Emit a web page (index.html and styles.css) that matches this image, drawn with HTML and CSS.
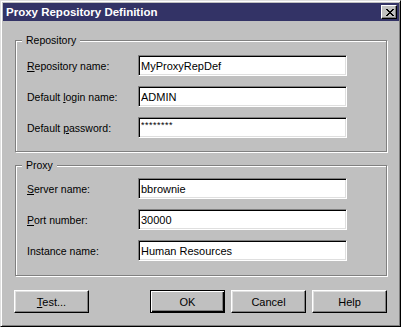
FILE: index.html
```html
<!DOCTYPE html>
<html lang="en">
<head>
    <meta charset="UTF-8">
    <meta name="viewport" content="width=device-width, initial-scale=1.0">
    <title>Proxy Repository Definition</title>
    <link rel="stylesheet" href="styles.css">
</head>
<body>
    <div class="window">
        <div class="titlebar">
            <span class="title">Proxy Repository Definition</span>
            <button class="close-btn" aria-label="Close">
                <svg width="8" height="7" viewBox="0 0 8 7" shape-rendering="crispEdges">
                    <path d="M0 0h2v1H0zM6 0h2v1H6zM1 1h2v1H1zM5 1h2v1H5zM2 2h4v1H2zM3 3h2v1H3zM2 4h4v1H2zM1 5h2v1H1zM5 5h2v1H5zM0 6h2v1H0zM6 6h2v1H6z" fill="#000"/>
                </svg>
            </button>
        </div>

        <div class="dialog-body">
            <fieldset class="group">
                <legend>Repository</legend>
                <div class="form-grid">
                    <label for="rep-name"><u>R</u>epository name:</label>
                    <input id="rep-name" class="field" type="text" value="MyProxyRepDef">

                    <label for="login-name">Default <u>l</u>ogin name:</label>
                    <input id="login-name" class="field" type="text" value="ADMIN">

                    <label for="password">Default <u>p</u>assword:</label>
                    <input id="password" class="field field-secret" type="text" value="********">
                </div>
            </fieldset>

            <fieldset class="group group-proxy">
                <legend>Proxy</legend>
                <div class="form-grid">
                    <label for="server-name"><u>S</u>erver name:</label>
                    <input id="server-name" class="field" type="text" value="bbrownie">

                    <label for="port-number"><u>P</u>ort number:</label>
                    <input id="port-number" class="field" type="text" value="30000">

                    <label for="instance-name">Instance name:</label>
                    <input id="instance-name" class="field" type="text" value="Human Resources">
                </div>
            </fieldset>

            <div class="buttons">
                <button class="btn"><u>T</u>est...</button>
                <button class="btn btn-default btn-ok">OK</button>
                <button class="btn">Cancel</button>
                <button class="btn">Help</button>
            </div>
        </div>
    </div>
</body>
</html>
```

FILE: styles.css
```css
:root {
    --face: #c0c0c0;
    --light: #dfdfdf;
    --shadow: #808080;
    --dark: #000000;
    --title: #333366;
}

* {
    box-sizing: border-box;
}

body {
    margin: 0;
    font-family: "Liberation Sans", Arial, sans-serif;
    font-size: 11px;
    background-color: var(--face);
    color: #000;
}

.window {
    width: 401px;
    height: 327px;
    background-color: var(--face);
    border: 1px solid;
    border-color: var(--light) var(--dark) var(--dark) var(--light);
    box-shadow: inset 1px 1px #fff, inset -1px -1px var(--shadow);
    padding: 2px 1px 1px 2px;
}

.titlebar {
    height: 18px;
    background-color: var(--title);
    display: flex;
    align-items: center;
    justify-content: space-between;
    padding: 0 2px 0 3px;
}

.title {
    color: #fff;
    font-weight: bold;
    font-size: 11.5px;
    line-height: 13px;
}

.close-btn {
    width: 16px;
    height: 14px;
    padding: 0 0 0 1px;
    background-color: var(--face);
    border: 1px solid;
    border-color: #fff var(--dark) var(--dark) #fff;
    box-shadow: inset -1px -1px var(--shadow);
    display: flex;
    align-items: center;
    justify-content: center;
}

.close-btn svg {
    display: block;
}

.dialog-body {
    padding: 13px 12px 0 12px;
}

/* etched group boxes */
.group {
    margin: 0;
    padding: 0;
    min-width: 0;
    border: 1px solid var(--shadow);
    box-shadow: inset 1px 1px #fff, 1px 1px #fff;
}

.group-proxy {
    margin-top: 7px;
}

.group legend {
    margin-left: 6px;
    padding: 0 4px;
    font-size: 10.5px;
    line-height: 13px;
    background-color: var(--face);
}

.form-grid {
    display: grid;
    grid-template-columns: 111px 209px;
    grid-auto-rows: 21px;
    row-gap: 10px;
    align-items: center;
    padding: 8px 0 13px 11px;
}

.group-proxy .form-grid {
    padding-top: 6px;
    padding-bottom: 14px;
}

.form-grid label {
    font-size: 10.5px;
    line-height: 13px;
    padding-top: 1px;
}

.field {
    width: 209px;
    height: 21px;
    margin: 0;
    padding: 2px;
    font: inherit;
    color: #000;
    background-color: #fff;
    border: 1px solid;
    border-color: var(--shadow) #fff #fff var(--shadow);
    box-shadow: inset 1px 1px var(--dark), inset -1px -1px var(--light);
    outline: none;
}

/* masked password: small asterisks sitting high in the box */
.field-secret {
    font-size: 9px;
    letter-spacing: 0.5px;
    padding: 1px 2px 7px;
}

.buttons {
    display: flex;
    gap: 6px;
    margin: 14px 0 0 -1px;
}

.btn {
    width: 75px;
    height: 23px;
    padding: 0;
    font: inherit;
    color: #000;
    background-color: var(--face);
    border: 1px solid;
    border-color: #fff var(--dark) var(--dark) #fff;
    box-shadow: inset -1px -1px var(--shadow), inset 1px 1px var(--light);
}

.btn-ok {
    margin-left: auto;
}

.btn-default {
    border-color: var(--dark);
    box-shadow: inset 1px 1px #fff, inset -1px -1px var(--dark), inset -2px -2px var(--shadow);
}
```
